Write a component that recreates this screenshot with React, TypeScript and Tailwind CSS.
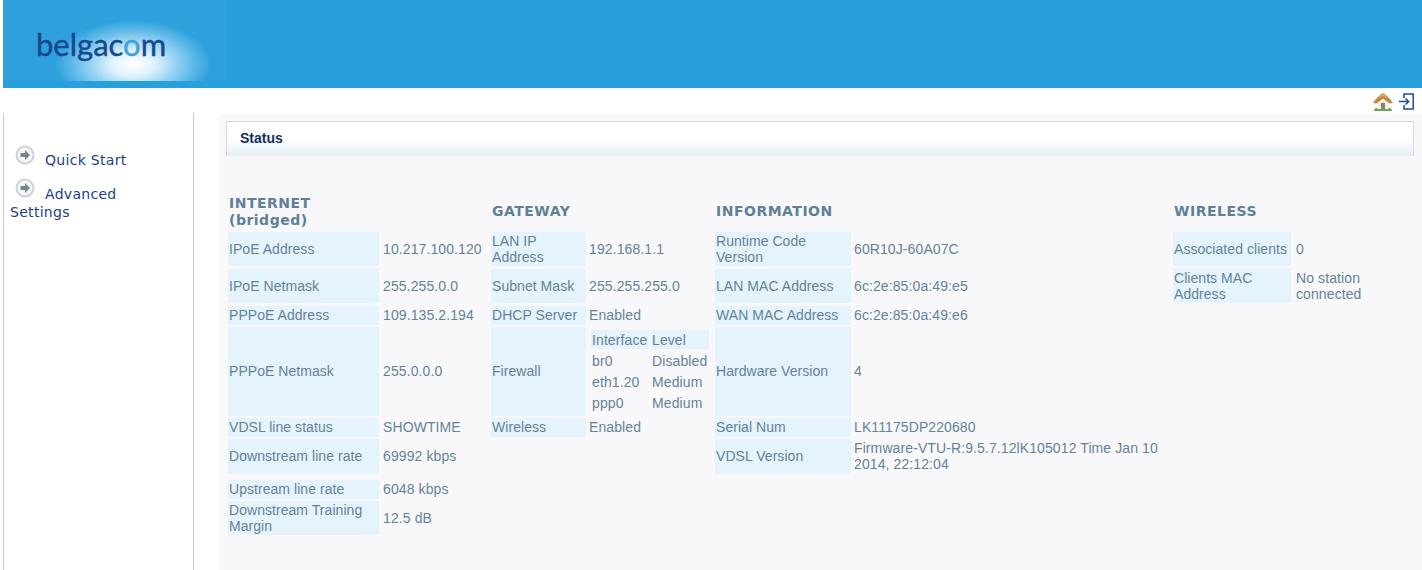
import React from "react";

const rows: [string, string, string, React.ReactNode, string, string, string, string][] = [
  ["IPoE Address", "10.217.100.120", "LAN IP Address", "192.168.1.1", "Runtime Code Version", "60R10J-60A07C", "Associated clients", "0"],
  ["IPoE Netmask", "255.255.0.0", "Subnet Mask", "255.255.255.0", "LAN MAC Address", "6c:2e:85:0a:49:e5", "Clients MAC Address", "No station connected"],
  ["PPPoE Address", "109.135.2.194", "DHCP Server", "Enabled", "WAN MAC Address", "6c:2e:85:0a:49:e6", "", ""],
  ["PPPoE Netmask", "255.0.0.0", "Firewall", <Firewall />, "Hardware Version", "4", "", ""],
  ["VDSL line status", "SHOWTIME", "Wireless", "Enabled", "Serial Num", "LK11175DP220680", "", ""],
  ["Downstream line rate", "69992 kbps", "", "", "VDSL Version", "Firmware-VTU-R:9.5.7.12lK105012 Time Jan 10 2014, 22:12:04", "", ""],
  ["Upstream line rate", "6048 kbps", "", "", "", "", "", ""],
  ["Downstream Training Margin", "12.5 dB", "", "", "", "", "", ""],
];

// left padding of each value column
const valuePad: Record<number, string> = { 1: "pl-[2px]", 3: "pl-[1px]", 5: "pl-[1px]", 7: "pl-[3px]" };

function Firewall() {
  const data = [
    ["br0", "Disabled"],
    ["eth1.20", "Medium"],
    ["ppp0", "Medium"],
  ];
  return (
    <div className="grid grid-cols-[58px_58px] gap-x-[2px] self-start mt-[3px] ml-[2px] leading-[16px]">
      <div className="bg-[#e4f3fc] h-[19px] mb-[1px] flex items-center pl-[1px]">Interface</div>
      <div className="bg-[#e4f3fc] h-[19px] mb-[1px] flex items-center pl-[1px]">Level</div>
      {data.map(([a, b]) => (
        <React.Fragment key={a}>
          <div className="h-[21px] flex items-center pl-[1px]">{a}</div>
          <div className="h-[21px] flex items-center pl-[1px] whitespace-nowrap">{b}</div>
        </React.Fragment>
      ))}
    </div>
  );
}

function Arrow() {
  return (
    <svg width="20" height="20" viewBox="0 0 20 20" className="shrink-0">
      <circle cx="10" cy="10" r="8.5" fill="#f6f7f8" stroke="#ced2d7" strokeWidth="2" />
      <path d="M10 5 15 10 10 15V12H5.5V8H10z" fill="#78838f" />
    </svg>
  );
}

function Logo() {
  return (
    <div className="w-[224px] h-[81px] bg-[radial-gradient(ellipse_78px_44px_at_130px_64px,#ffffff_0%,#def2fc_28%,#9ed6f3_52%,#62bbe9_76%,#2ea1dd_100%)] pl-[33px] pt-[24px]">
      <span className="font-['Lato',sans-serif] text-[31px] leading-[40px] text-[#17488f] [-webkit-text-stroke:0.4px_#17488f]">
        belgac<span className="text-[#3f9fdc] [-webkit-text-stroke:0.4px_#3f9fdc]">o</span>m
      </span>
    </div>
  );
}

function Home() {
  return (
    <svg width="20" height="18" viewBox="0 0 20 18">
      <path d="M1 17C2 14.5 4 14.5 5 15.5H15C16 14.5 18 14.5 19 17V18H1z" fill="#6fa552" />
      <path d="M4.5 8.5 10 4.5 15.5 8.5V16H4.5z" fill="#f2ecdc" />
      <path d="M8 10h4v6H8z" fill="#7f858a" />
      <path d="M0 10C2 7 6 2 10 0 14 2 18 7 20 10L16.5 10.5 10 5.5 3.5 10.5z" fill="#c08a45" />
      <path d="M5 5C7 3 8.500 1.500 10 .8 11.500 1.500 13 3 15 5L10 3z" fill="#dcae68" />
    </svg>
  );
}

function Logout() {
  return (
    <svg width="15" height="17" viewBox="0 0 15 17" fill="none" stroke="#1f4c8f" strokeWidth="1.5">
      <path d="M5 5V1h9.2v15H5v-4" />
      <path d="M0 8.5h9" />
      <path d="M6.500 5.500 9.600 8.500 6.500 11.500" />
    </svg>
  );
}

export default function App() {
  const label = "bg-[#e4f3fc] flex items-center pl-[1px] leading-[16px] tracking-[0.05px]";
  const value = "flex items-center leading-[16px] tracking-[0.1px]";
  return (
    <div className="w-[1422px] h-[570px] overflow-hidden bg-white pl-[3px] font-['Liberation_Sans',Arial,sans-serif] text-[14px] text-[#658397]">
      <div className="h-[88px] bg-[#27a0dc]">
        <Logo />
      </div>

      <div className="h-[25px] flex items-start justify-end gap-[6px] pt-[5px] pr-[8px]">
        <Home />
        <Logout />
      </div>

      <div className="flex h-[457px]">
        <div className="w-[191px] border-x border-[#c8ccd0] pt-[32px] font-['DejaVu_Sans',sans-serif] text-[14px] leading-[18px] tracking-[0.3px] text-[#1c3f8c]">
          <div className="flex items-start pl-[11px] h-[33px]">
            <Arrow />
            <span className="ml-[10px] mt-[6px]">Quick Start</span>
          </div>
          <div className="pl-[6px]">
            <div className="flex items-start pl-[5px]">
              <Arrow />
              <span className="ml-[10px] mt-[7px]">Advanced</span>
            </div>
            <div>Settings</div>
          </div>
        </div>

        <div className="ml-[25px] mt-[1px] flex-1 bg-[#f8f8fb] pt-[7px] pl-[7px] pr-[8px]">
          <div className="h-[35px] border border-[#d5d8de] border-b-0 bg-gradient-to-b from-white via-white to-[#e4eef8] pl-[13px] pt-[6px] font-bold leading-[20px] text-[#0f2f66]">
            Status
          </div>

          <div className="mt-[38px] ml-[2px] grid grid-cols-[151px_108px_95px_125px_136px_318px_118px_120px] grid-rows-[36px_35px_35px_19px_89px_19px_39px_19px_34px] gap-x-[2px] gap-y-[2px]">
            <Heading>
              INTERNET
              <br />
              (bridged)
            </Heading>
            <div />
            <Heading center>GATEWAY</Heading>
            <div />
            <Heading center>INFORMATION</Heading>
            <div />
            <Heading center>WIRELESS</Heading>
            <div />
            {rows.map((r, i) => {
              // first two rows and the VDSL row sit further from the next row
              const spacing = i < 2 ? "mb-[1px]" : i === 5 ? "mb-[4px]" : "";
              // middle rows have their text a pixel above centre
              const nudge = i >= 2 && i <= 6 ? "pb-[2px]" : "";
              return (
                <React.Fragment key={i}>
                  {r.map((cell, j) =>
                    j % 2 === 0 ? (
                      <div key={j} className={cell ? `${label} ${spacing} ${nudge}` : ""}>{cell}</div>
                    ) : (
                      <div key={j} className={`${value} ${valuePad[j]} ${spacing} ${nudge}`}>{cell}</div>
                    ),
                  )}
                </React.Fragment>
              );
            })}
          </div>
        </div>
      </div>
    </div>
  );
}

function Heading({ children, center }: { children: React.ReactNode; center?: boolean }) {
  return (
    <div className={`font-['DejaVu_Sans',sans-serif] font-bold text-[14px] leading-[17px] tracking-[0.5px] text-[#5f8096] pl-[1px] whitespace-nowrap ${center ? "pt-[9px]" : "pt-[1px]"}`}>
      {children}
    </div>
  );
}
